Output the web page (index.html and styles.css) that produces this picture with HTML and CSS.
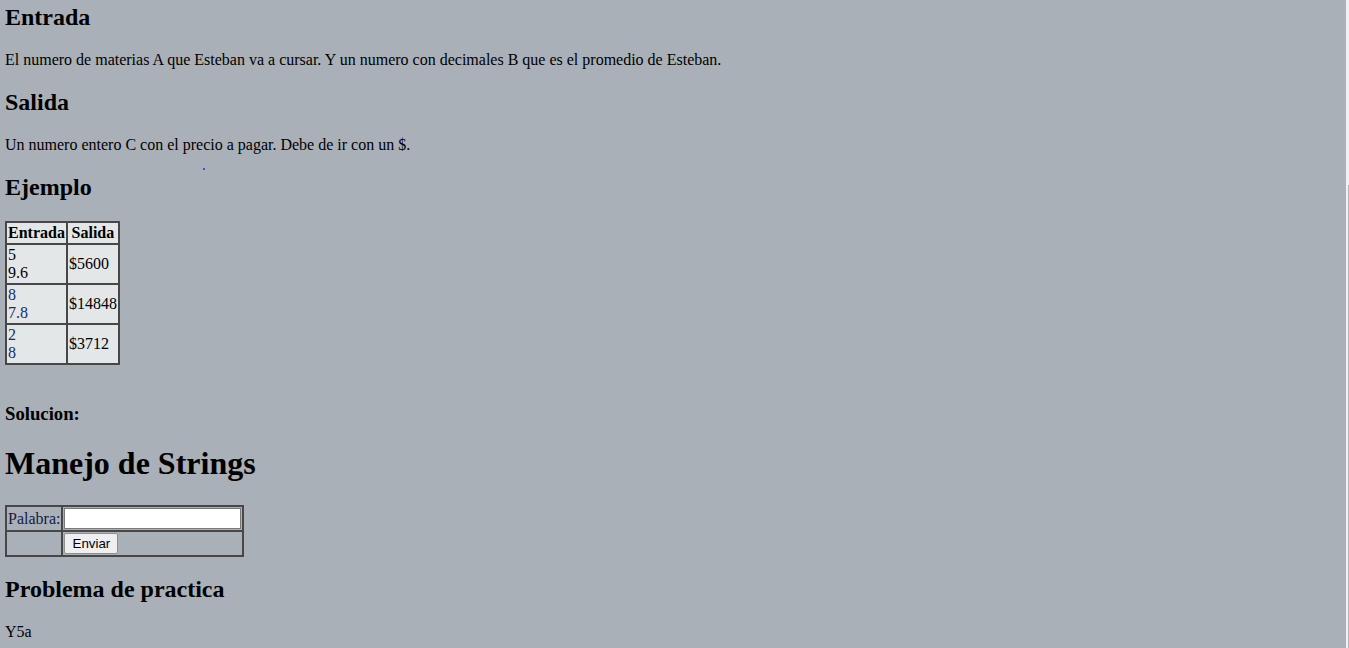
FILE: index.html
```html
<!DOCTYPE html>
<html lang="es">
<head>
<meta charset="utf-8">
<title>Problema</title>
<link rel="stylesheet" href="styles.css">
</head>
<body>
<h2 class="first">Entrada</h2>
<p>El numero de materias A que Esteban va a cursar. Y un numero con decimales B que es el promedio de Esteban.</p>
<h2>Salida</h2>
<p>Un numero entero C con el precio a pagar. Debe de ir con un $.</p>
<h2 class="ejemplo">Ejemplo</h2>
<table class="ejemplos">
  <tr><th>Entrada</th><th>Salida</th></tr>
  <tr><td>5<br>9.6</td><td>$5600</td></tr>
  <tr><td class="navy">8<br>7.8</td><td>$14848</td></tr>
  <tr><td class="navy">2<br>8</td><td>$3712</td></tr>
</table>
<br>
<h3 class="solucion">Solucion:</h3>
<h1 class="titulo">Manejo de Strings</h1>
<form class="form" onsubmit="return false">
  <table class="campos">
    <tr><td class="label">Palabra:</td><td><input class="texto" type="text"></td></tr>
    <tr><td></td><td><button class="boton" type="submit">Enviar</button></td></tr>
  </table>
</form>
<h2 class="practica">Problema de practica</h2>
<p>Y5a</p>
<div class="scrollbar"><div class="thumb"></div></div>
</body>
</html>
```
FILE: styles.css
```css
html {
  background: #aab0b7;
}
body {
  margin: 0 5px;
  padding-top: 4px;
  font-family: "Liberation Serif", "Times New Roman", serif;
  font-size: 16px;
  color: #000;
  overflow: hidden;
}
h1 {
  font-size: 32px;
  margin: 21.44px 0;
}
h2 {
  font-size: 24px;
  margin: 19.92px 0;
}
h2.first {
  margin-top: 0;
}
h3 {
  font-size: 18.72px;
  margin: 18.72px 0;
}
p {
  margin: 16px 0;
}
.solucion {
  margin-top: 20.72px;
}
.titulo {
  margin-top: 19.44px;
  margin-bottom: 23.44px;
}
.practica {
  margin-top: 18.92px;
}
.ejemplo {
  position: relative;
}
.ejemplo::before {
  content: "";
  position: absolute;
  left: 198px;
  top: -6px;
  width: 2px;
  height: 2px;
  border-radius: 1px;
  background: #2a2ae0;
}
.ejemplos {
  border: 1px solid #474747;
  border-spacing: 0;
  background: #e4e7e8;
}
.ejemplos th,
.ejemplos td {
  border: 1px solid #474747;
  padding: 1px;
}
.ejemplos th {
  text-align: center;
}
.ejemplos td {
  text-align: left;
  vertical-align: middle;
}
.navy {
  color: #142d66;
}
.form {
  margin: 0;
}
.campos {
  border: 1px solid #474747;
  border-spacing: 0;
}
.campos td {
  border: 1px solid #474747;
  padding: 1px;
}
.label {
  color: #141a45;
}
.texto {
  box-sizing: border-box;
  width: 177px;
  height: 21px;
  margin: 0;
  display: block;
  border: 1px solid #7a7a7a;
  background: #fff;
  font-family: "Liberation Sans", Arial, sans-serif;
  font-size: 13.33px;
}
.boton {
  box-sizing: border-box;
  display: block;
  width: 54px;
  height: 21px;
  margin: 0;
  padding: 0 6px;
  border: 1px solid #8f8f8f;
  border-radius: 2px;
  background: #efefef;
  color: #000;
  font-family: "Liberation Sans", Arial, sans-serif;
  font-size: 13.33px;
}
.scrollbar {
  position: fixed;
  top: 0;
  right: 0;
  bottom: 0;
  width: 3px;
  background: #f1f1f1;
}
.thumb {
  margin-top: 185px;
  margin-left: 2px;
  width: 1px;
  height: 463px;
  background: #b5b5b5;
}
```
